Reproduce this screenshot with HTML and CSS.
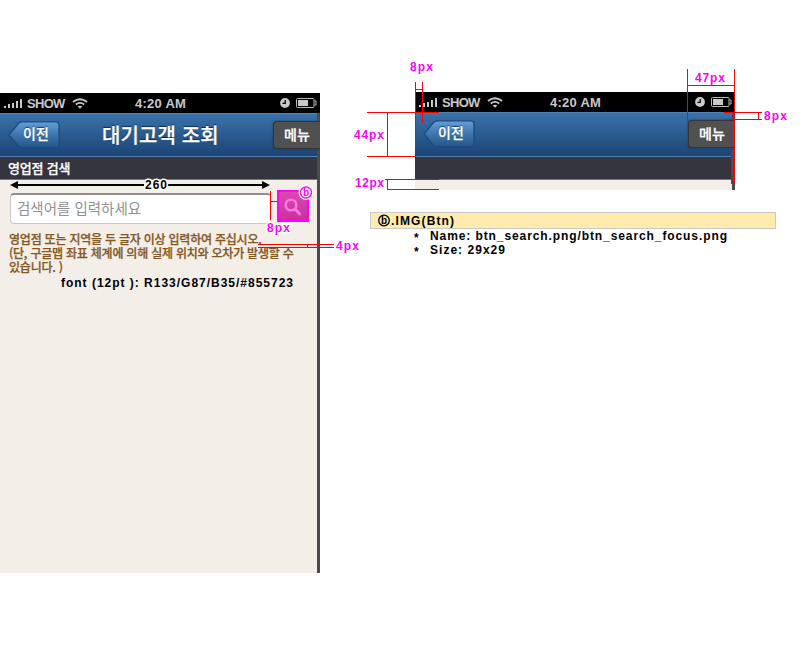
FILE: index.html
```html
<!DOCTYPE html>
<html lang="ko">
<head>
<meta charset="utf-8">
<title>대기고객 조회</title>
<link rel="stylesheet" href="styles.css">
</head>
<body>
<svg class="defs" width="0" height="0" aria-hidden="true">
  <defs>
    <linearGradient id="backFill" x1="0" y1="0" x2="0" y2="1"><stop offset="0" stop-color="#649fdc"/><stop offset=".45" stop-color="#4179b3"/><stop offset="1" stop-color="#245487"/></linearGradient>
    <symbol id="signal" viewBox="0 0 20 10"><path d="M0 8h2v2H0zM4 6h2v4H4zM8 5h2v5H8zM12 3h2v7h-2zM16 1h2v9h-2z" fill="#c9c9c9"/></symbol>
    <symbol id="wifi" viewBox="0 0 16 11"><path d="M1 4Q8-1.4 15 4M3.8 6.5Q8 3.3 12.200 6.500" fill="none" stroke="#c9c9c9" stroke-width="1.900"/><path d="M5.700 8.500Q8 6.800 10.300 8.500L8 10.800Z" fill="#c9c9c9"/></symbol>
    <symbol id="clock" viewBox="0 0 10 10"><circle cx="5" cy="5" r="4.900" fill="#c9c9c9"/><path d="M5.200 2v3.300H2.500" fill="none" stroke="#000" stroke-width="1.300"/></symbol>
    <symbol id="battery" viewBox="0 0 21 10"><rect x=".5" y=".5" width="17.500" height="9" rx="1" fill="none" stroke="#bbb"/><path d="M2 2h10v6H2z" fill="#c9c9c9"/><path d="M18.500 3h1.500v4h-1.500" fill="none" stroke="#bbb"/></symbol>
    <symbol id="back" viewBox="0 0 52 28"><path d="M1 14L10 3Q12 .8 14 .8H48Q51 .8 51 4V24Q51 27 48 27H14Q12 27 10 25Z" fill="url(#backFill)" stroke="#1d4a7c" stroke-width="1.300"/></symbol>
  </defs>
</svg>
<main class="board">
  <section class="phone phone-full">
    <div class="status"><svg class="signal"><use href="#signal"/></svg><span class="carrier">SHOW</span><svg class="wifi"><use href="#wifi"/></svg><span class="time">4:20 AM</span><svg class="clock"><use href="#clock"/></svg><svg class="battery"><use href="#battery"/></svg></div>
    <div class="screen">
      <header class="nav"><div class="back"><svg class="back-shape"><use href="#back"/></svg><span>이전</span></div><h1>대기고객 조회</h1><div class="menu">메뉴</div></header>
      <div class="section">영업점 검색</div>
      <div class="content">
        <div class="search">
          <div class="field">검색어를 입력하세요</div>
          <div class="find"><svg width="18" height="18" viewBox="0 0 18 18"><circle cx="7" cy="7" r="5.300" fill="none" stroke="#ff78ee" stroke-width="2.500"/><path d="M11 11L15.500 15.800" stroke="#ff78ee" stroke-width="3" stroke-linecap="round"/></svg></div>
        </div>
        <p class="help">영업점 또는 지역을 두 글자 이상 입력하여 주십시오.<br>(단, 구글맵 좌표 체계에 의해 실제 위치와 오차가 발생할 수<br>있습니다. )</p>
      </div>
    </div>
  </section>
  <div class="side">
    <section class="phone phone-crop">
      <div class="status"><svg class="signal"><use href="#signal"/></svg><span class="carrier">SHOW</span><svg class="wifi"><use href="#wifi"/></svg><span class="time">4:20 AM</span><svg class="clock"><use href="#clock"/></svg><svg class="battery"><use href="#battery"/></svg></div>
      <div class="screen">
        <header class="nav"><div class="back"><svg class="back-shape"><use href="#back"/></svg><span>이전</span></div><div class="menu">메뉴</div></header>
        <div class="section"></div>
        <div class="content"></div>
      </div>
    </section>
    <div class="note-bar"></div>
  </div>
</main>
<svg class="marks" width="800" height="648" viewBox="0 0 800 648">
  <path class="arrow" d="M15 185H144M168 185H264"/>
  <path d="M10 185l8-4v8zM270 185l-8-4v8z"/>
  <g class="label pink">
    <text x="267" y="232" textLength="23">8px</text>
    <text x="336" y="250" textLength="23">4px</text>
    <text x="410" y="71" textLength="23">8px</text>
    <text x="354" y="139" textLength="30">44px</text>
    <text x="355" y="187" textLength="29">12px</text>
    <text x="695" y="82" textLength="30">47px</text>
    <text x="764" y="120" textLength="23">8px</text>
  </g>
  <g class="rule">
    <path d="M270.500 191v29M277.500 191v29M270 201.500h8"/>
    <path d="M258 244.500h76M258 247.500h76M307.500 244v4"/>
    <path d="M415.500 82v63M422.500 82v41M415 89.500h8"/>
    <path d="M367 112.500h72M367 156.500h49M387.500 112v45"/>
    <path d="M385 179.500h54M387 189.500h52M387.500 179v11"/>
    <path d="M687.500 69v70M734.500 69v115M687 85.500h48"/>
    <path d="M724 112.500h38M724 119.500h38M758.500 112v8"/>
    <path d="M731.500 148v36M731 170.500h4"/>
  </g>
  <path class="focus" d="M278 191h30v29h-30z"/>
  <circle cx="306" cy="192.500" r="7.500" fill="#fff"/>
  <circle class="badge" cx="306" cy="192.500" r="5.500"/>
  <g class="label">
    <text x="303" y="196" class="tiny badge-letter">b</text>
    <text x="145" y="189" textLength="22" class="halo">260</text>
    <text x="61" y="287" textLength="232">font (12pt ): R133/G87/B35/#855723</text>
    <circle cx="384" cy="220.500" r="5.300" fill="none" stroke="#000" stroke-width="1.300"/>
    <text x="381" y="224" class="tiny">b</text>
    <text x="391" y="225" textLength="63">.IMG(Btn)</text>
    <text x="414" y="242">*</text>
    <text x="430" y="240" textLength="297">Name: btn_search.png/btn_search_focus.png</text>
    <text x="414" y="256">*</text>
    <text x="430" y="254" textLength="75">Size: 29x29</text>
  </g>
</svg>
</body>
</html>
```
FILE: styles.css
```css
* { box-sizing: border-box; }
body { margin: 0; background: #fff; font-family: "Liberation Sans", "Noto Sans CJK KR", sans-serif; }
.defs { display: block; }
.board { display: flex; height: 648px; overflow: hidden; }
.phone { width: 320px; display: flex; flex-direction: column; overflow: hidden; }
.phone-full { height: 480px; margin-top: 93px; }
.phone-crop { height: 98px; margin: 92px 0 0 45px; }
.side { margin-left: 50px; }
.status { height: 20px; background: #000; color: #c9c9c9; display: flex; align-items: center; font-weight: bold; font-size: 13px; flex-shrink: 0; }
.signal { width: 20px; height: 10px; margin-left: 4px; }
.carrier { width: 38px; margin-left: 3px; letter-spacing: -.7px; }
.wifi { width: 16px; height: 11px; margin-left: 7px; }
.time { width: 54px; margin-left: 47px; white-space: nowrap; letter-spacing: .25px; }
.clock { width: 10px; height: 10px; margin-left: 91px; }
.battery { width: 21px; height: 10px; margin-left: 6px; }
.screen { flex: 1; display: flex; flex-direction: column; border-right: 3px solid #4b4b4d; background: #f3eee8; min-height: 0; font-family: "Noto Sans CJK KR", sans-serif; -webkit-text-stroke-width: .25px; }
.nav { height: 44px; flex-shrink: 0; display: flex; align-items: center; border-top: 1px solid #5581b0; border-bottom: 1px solid #5581b0; background: linear-gradient(#3a72aa, #1b4475); color: #fff; }
.back { width: 52px; height: 28px; margin-left: 8px; display: grid; font-size: 14px; font-weight: 500; line-height: 25px; text-shadow: 0 -1px 1px #163b64; }
.back-shape { grid-area: 1 / 1; width: 52px; height: 28px; }
.back span { grid-area: 1 / 1; padding-left: 15px; z-index: 1; }
h1 { width: 160px; margin: 0 0 1px 42px; font-size: 20px; line-height: 40px; font-weight: 500; white-space: nowrap; text-shadow: 0 -1px 1px #0b294c; letter-spacing: .1px; }
.menu { width: 47px; height: 28px; margin: 0 -3px 0 auto; padding-left: 10px; border: 1px solid #353539; border-right: 0; border-radius: 4px 0 0 4px; background: #505050; font-size: 14px; font-weight: 500; line-height: 25px; box-shadow: 0 0 2px #203651; }
.section { height: 23px; flex-shrink: 0; padding-left: 8px; border-bottom: 1px solid #77767a; background: #35353f; color: #fff; font-size: 13px; font-weight: 500; line-height: 21px; letter-spacing: -.2px; }
.phone-crop .nav { height: 45px; }
.phone-crop .menu, .phone-crop .back { margin-bottom: 1px; }
.content { padding: 11px 0 0 8px; }
.phone-crop .content { padding: 0; }
.search { display: flex; gap: 7px; height: 32px; }
.field { width: 261px; height: 31px; margin-left: 2px; margin-top: 2px; padding-left: 6px; border: 1px solid #c9c6c3; border-top: 2px solid #918f8d; border-radius: 4px; background: #fff; color: #919191; font-size: 14.5px; line-height: 25px; -webkit-text-stroke-width: 0; }
.find { width: 32px; height: 31px; margin-left: -1px; background: linear-gradient(#dc49b2, #c92f9d); display: flex; align-items: center; justify-content: center; }
.help { margin: 9px 0 0 1px; color: #855723; font-size: 12px; font-weight: 500; line-height: 14px; white-space: nowrap; letter-spacing: -.22px; }
.note-bar { width: 406px; height: 17px; margin-top: 22px; border: 1px solid #c9c9c9; background: #ffebae; }
.marks { position: absolute; left: 0; top: 0; }
.rule { stroke: #f00; stroke-width: 1; fill: none; }
.arrow { stroke: #000; stroke-width: 2; }
.focus { stroke: #f0f; stroke-width: 2; fill: none; }
.badge { stroke: #f0f; stroke-width: 1.4; fill: #fff; }
.label { font: bold 12px "Liberation Sans", sans-serif; fill: #000; }
.pink { fill: #f0f; }
.tiny { font-size: 10px; }
.badge-letter { fill: #f0f; }
.halo, .pink text { paint-order: stroke; stroke: #fff; stroke-width: 3px; stroke-linejoin: round; }
```
